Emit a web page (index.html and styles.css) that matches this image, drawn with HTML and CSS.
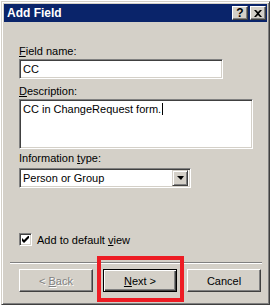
FILE: index.html
```html
<!DOCTYPE html>
<html lang="en">
<head>
  <meta charset="UTF-8" />
  <title>Add Field</title>
  <link rel="stylesheet" href="styles.css">
</head>
<body>
  <div class="dialog">
    <div class="titlebar">
      <span class="title">Add Field</span>
      <div class="title-buttons">
        <span class="tbtn">?</span>
        <span class="tbtn">
          <svg width="8" height="7" viewBox="0 0 8 7"><path d="M0 0h2l2 2 2-2h2L5 3.5 8 7H6L4 5 2 7H0l3-3.5z" fill="#000"/></svg>
        </span>
      </div>
    </div>

    <div class="content">
      <div class="label"><u>F</u>ield name:</div>
      <div class="sunken field-name">CC</div>

      <div class="label label-desc"><u>D</u>escription:</div>
      <div class="sunken description">CC in ChangeRequest form.<span class="caret"></span></div>

      <div class="label label-type">Information <u>t</u>ype:</div>
      <div class="sunken select">
        <span class="select-text">Person or Group</span>
        <span class="drop-btn"><span class="arrow"></span></span>
      </div>

      <div class="check-row">
        <span class="checkbox">
          <svg width="7" height="7" viewBox="0 0 7 7"><path d="M0 2l2 2 5-5v3l-5 5-2-2z" fill="#000"/></svg>
        </span>
        <span>Add to default <u>v</u>iew</span>
      </div>
    </div>

    <div class="separator"></div>

    <div class="buttons">
      <div class="btn disabled"><span>&lt; <u>B</u>ack</span></div>
      <div class="btn default"><span><u>N</u>ext &gt;</span></div>
      <div class="btn"><span>Cancel</span></div>
    </div>

    <div class="highlight"></div>
  </div>
</body>
</html>
```

FILE: styles.css
```css
body {
  margin: 0;
  background: #fff;
  font-family: "Liberation Sans", Arial, sans-serif;
  font-size: 11px;
  color: #000;
}

.dialog {
  position: relative;
  box-sizing: border-box;
  width: 269px;
  height: 304px;
  margin: 1px 0 0 1px;
  padding: 2px;
  background: #d4d0c8;
  border: 1px solid;
  border-color: #d4d0c8 #404040 #404040 #d4d0c8;
  box-shadow: inset 1px 1px #fff, inset -1px -1px #808080;
}

.titlebar {
  height: 18px;
  background: #0a246a;
  display: flex;
  align-items: center;
  justify-content: space-between;
  padding: 0 1px 0 3px;
}

.title {
  color: #fff;
  font-weight: bold;
  font-size: 12px;
}

.title-buttons {
  display: flex;
  gap: 2px;
}

.tbtn {
  box-sizing: border-box;
  width: 16px;
  height: 14px;
  display: flex;
  align-items: center;
  justify-content: center;
  background: #d4d0c8;
  border: 1px solid;
  border-color: #fff #404040 #404040 #fff;
  box-shadow: inset -1px -1px #808080;
  font-weight: bold;
  font-size: 12px;
  line-height: 1;
}

.content {
  padding: 23px 0 0 15px;
}

.label {
  height: 13px;
  line-height: 13px;
  margin-bottom: 1px;
}

.label-desc {
  margin-top: 6px;
}

.label-type {
  margin-top: 3px;
  margin-bottom: 3px;
}

.sunken {
  box-sizing: border-box;
  background: #fff;
  border: 1px solid;
  border-color: #808080 #fff #fff #808080;
  box-shadow: inset 1px 1px #404040, inset -1px -1px #d4d0c8;
}

.field-name {
  width: 204px;
  height: 20px;
  line-height: 18px;
  padding-left: 3px;
}

.description {
  width: 234px;
  height: 50px;
  line-height: 13px;
  padding: 3px 0 0 3px;
}

.caret {
  display: inline-block;
  width: 1px;
  height: 12px;
  background: #000;
  vertical-align: -2px;
  margin-left: 1px;
}

.select {
  width: 172px;
  height: 20px;
  display: flex;
  align-items: center;
  justify-content: space-between;
  padding: 0 2px 0 3px;
}

.drop-btn {
  box-sizing: border-box;
  width: 16px;
  height: 16px;
  display: flex;
  align-items: center;
  justify-content: center;
  background: #d4d0c8;
  border: 1px solid;
  border-color: #d4d0c8 #404040 #404040 #d4d0c8;
  box-shadow: inset 1px 1px #fff, inset -1px -1px #808080;
}

.arrow {
  width: 0;
  height: 0;
  border-left: 4px solid transparent;
  border-right: 3px solid transparent;
  border-top: 4px solid #000;
}

.check-row {
  display: flex;
  align-items: center;
  gap: 5px;
  height: 13px;
  margin-top: 45px;
}

.checkbox {
  box-sizing: border-box;
  width: 13px;
  height: 13px;
  display: flex;
  align-items: center;
  justify-content: center;
  background: #fff;
  border: 1px solid;
  border-color: #808080 #fff #fff #808080;
  box-shadow: inset 1px 1px #404040, inset -1px -1px #d4d0c8;
}

.separator {
  margin: 16px 5px 0 6px;
  border-top: 1px solid #808080;
  border-bottom: 1px solid #fff;
  height: 0;
}

.buttons {
  display: flex;
  gap: 10px;
  margin: 5px 0 0 15px;
}

.btn {
  box-sizing: border-box;
  width: 74px;
  height: 23px;
  display: flex;
  align-items: center;
  justify-content: center;
  border: 1px solid;
  border-color: #fff #404040 #404040 #fff;
  box-shadow: inset -1px -1px #808080;
}

.btn.default {
  border: 1px solid #000;
  box-shadow: inset 1px 1px #fff, inset -1px -1px #404040, inset -2px -2px #808080;
}

.btn.disabled {
  color: #808080;
  text-shadow: 1px 1px #fff;
}

.highlight {
  position: absolute;
  left: 95px;
  top: 254px;
  width: 79px;
  height: 38px;
  border: 4px solid #ed1c24;
}
```
